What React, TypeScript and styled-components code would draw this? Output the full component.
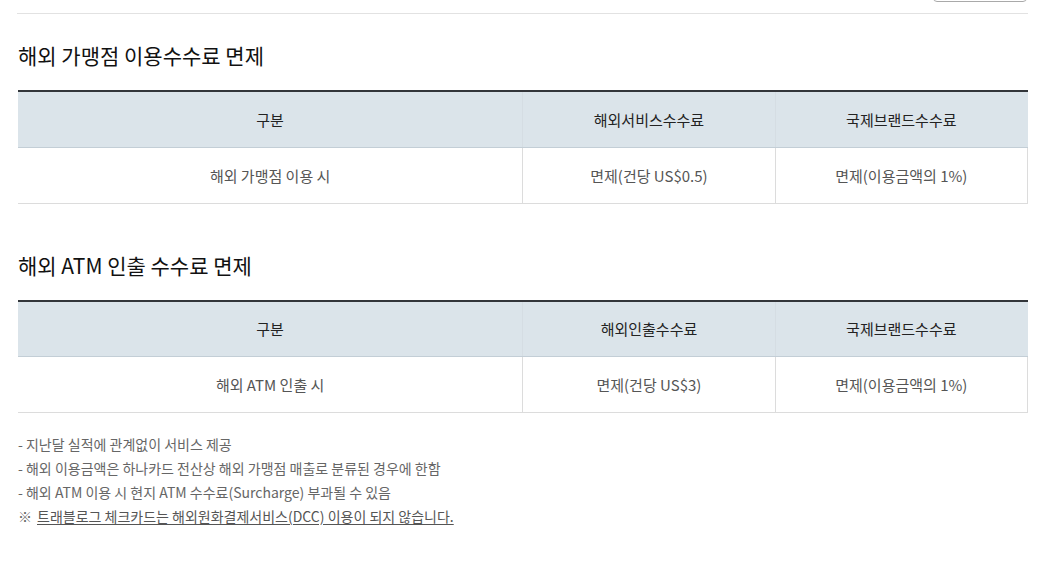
import React from "react";
import styled, { createGlobalStyle } from "styled-components";

const GlobalStyle = createGlobalStyle`
  html, body { margin: 0; padding: 0; background: #fff; }
  body { font-family: "Noto Sans CJK KR", "Noto Sans", sans-serif; color: #222; }
  * { box-sizing: border-box; }
`;

const Page = styled.div`
  padding: 0 22px 40px 17px;
`;

const TopBar = styled.div`
  height: 14px;
  border-bottom: 1px solid #e2e2e2;
  display: flex;
  justify-content: flex-end;
  align-items: flex-end;
`;

const TopButton = styled.div`
  width: 94px;
  height: 30px;
  margin-bottom: 11px;
  margin-right: 1px;
  border: 1px solid #a9a9a9;
  border-radius: 4px;
  background: #fff;
`;

const Section = styled.section<{ $top: number }>`
  padding-left: 1px;
  margin-top: ${(p) => p.$top}px;
`;

const Title = styled.h2`
  margin: 0 0 20px;
  font-size: 21px;
  line-height: 30px;
  font-weight: 400;
  color: #111;
`;

const Table = styled.table`
  width: 100%;
  border-collapse: collapse;
  table-layout: fixed;
  border-top: 2px solid #33363a;
`;

const Th = styled.th<{ $last?: boolean }>`
  height: 56px;
  padding: 0;
  background: #dbe4ea;
  border-bottom: 1px solid #c3ced6;
  border-left: 1px solid #d5dde3;
  border-right: ${(p) => (p.$last ? "1px solid #dbe4ea" : "none")};
  font-size: 15px;
  font-weight: 400;
  color: #222;
  text-align: center;
  &:first-child { border-left: none; }
`;

const Td = styled.td<{ $last?: boolean }>`
  height: 56px;
  padding: 0;
  border-bottom: 1px solid #dcdcdc;
  border-left: 1px solid #dcdcdc;
  border-right: ${(p) => (p.$last ? "1px solid #dcdcdc" : "none")};
  font-size: 15px;
  color: #555;
  text-align: center;
  &:first-child { border-left: none; }
`;

const Notes = styled.ul`
  list-style: none;
  margin: 19px 0 0;
  padding: 0;
`;

const Note = styled.li`
  font-size: 14px;
  line-height: 24px;
  color: #666;
`;

const Mark = styled.span`
  margin-right: 5px;
`;

const Underlined = styled.span`
  text-decoration: underline;
  text-underline-offset: 2px;
  color: #555;
`;

const FeeTable = ({ head, row }: { head: [string, string, string]; row: [string, string, string] }) => (
  <Table>
    <colgroup>
      <col style={{ width: "50%" }} />
      <col style={{ width: "25%" }} />
      <col style={{ width: "25%" }} />
    </colgroup>
    <thead>
      <tr>
        {head.map((h, i) => (
          <Th key={h} $last={i === 2}>{h}</Th>
        ))}
      </tr>
    </thead>
    <tbody>
      <tr>
        {row.map((c, i) => (
          <Td key={c} $last={i === 2}>{c}</Td>
        ))}
      </tr>
    </tbody>
  </Table>
);

export default function App() {
  return (
    <Page>
      <GlobalStyle />
      <TopBar>
        <TopButton />
      </TopBar>
      <Section $top={26}>
        <Title>해외 가맹점 이용수수료 면제</Title>
        <FeeTable
          head={["구분", "해외서비스수수료", "국제브랜드수수료"]}
          row={["해외 가맹점 이용 시", "면제(건당 US$0.5)", "면제(이용금액의 1%)"]}
        />
      </Section>
      <Section $top={46}>
        <Title>해외 ATM 인출 수수료 면제</Title>
        <FeeTable
          head={["구분", "해외인출수수료", "국제브랜드수수료"]}
          row={["해외 ATM 인출 시", "면제(건당 US$3)", "면제(이용금액의 1%)"]}
        />
        <Notes>
          <Note>- 지난달 실적에 관계없이 서비스 제공</Note>
          <Note>- 해외 이용금액은 하나카드 전산상 해외 가맹점 매출로 분류된 경우에 한함</Note>
          <Note>- 해외 ATM 이용 시 현지 ATM 수수료(Surcharge) 부과될 수 있음</Note>
          <Note>
            <Mark>※</Mark>
            <Underlined>트래블로그 체크카드는 해외원화결제서비스(DCC) 이용이 되지 않습니다.</Underlined>
          </Note>
        </Notes>
      </Section>
    </Page>
  );
}
